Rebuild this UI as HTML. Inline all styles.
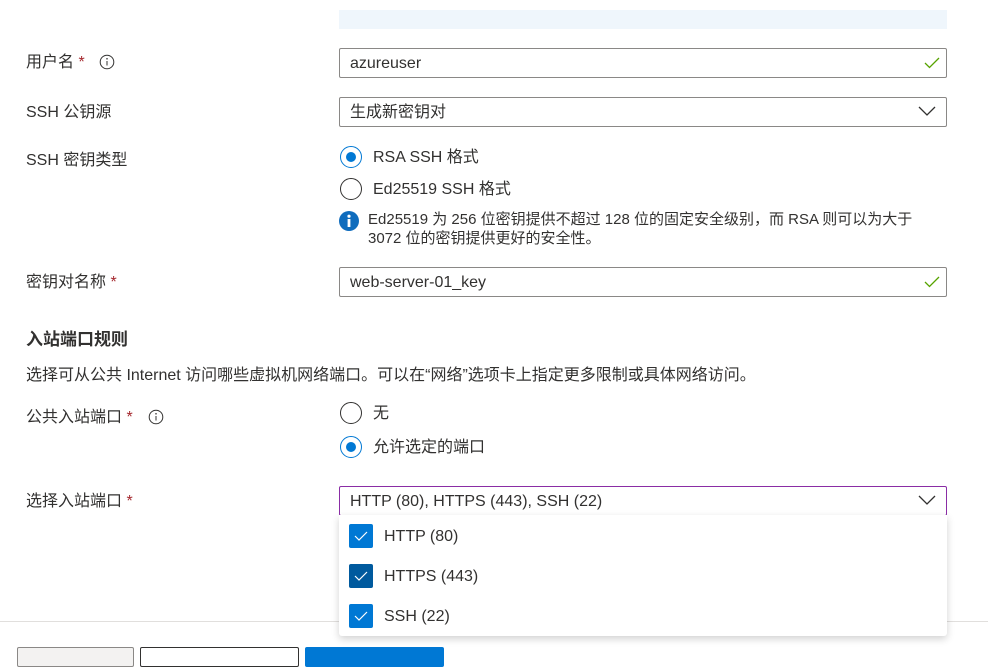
<!DOCTYPE html>
<html><head><meta charset="utf-8"><style>
*{box-sizing:border-box;margin:0;padding:0}
body{width:988px;height:653px;overflow:hidden;background:#fff;position:relative;font-family:"Liberation Sans","Noto Sans CJK SC",sans-serif;color:#323130;font-size:16px}
.a{position:absolute;white-space:nowrap}
.lbl{left:26px;line-height:20px}
.req{color:#a4262c}
.inp{position:absolute;left:339px;width:608px;height:30px;border:1px solid #8a8886;border-radius:2px;padding:0 10px;line-height:29px;font-size:16px}
.radio{position:absolute;left:340px;width:22px;height:22px;border:1.5px solid #323130;border-radius:50%}
.radio.on{border-color:#0078d4}
.radio.on::after{content:"";position:absolute;left:4.5px;top:4.5px;width:10px;height:10px;border-radius:50%;background:#0078d4}
.cb{position:absolute;left:349px;width:24px;height:24px;background:#0078d4;border-radius:2px}
.btn{position:absolute;top:647px;height:20px;border-radius:2px}
</style></head><body>
<div class="a" style="left:339px;top:10px;width:608px;height:19px;background:#eff6fc"></div>

<div class="a lbl" style="top:53px">用户名 <span class="req">*</span></div>
<svg class="a" style="left:99px;top:54px" width="16" height="16" viewBox="0 0 16 16"><circle cx="8" cy="8" r="6.8" fill="none" stroke="#323130" stroke-width="1"/><line x1="8" y1="7" x2="8" y2="11.5" stroke="#323130"/><circle cx="8" cy="4.8" r=".8" fill="#323130"/></svg>
<div class="inp" style="top:48px">azureuser</div>
<svg class="a" style="left:924px;top:56px" width="16" height="14" viewBox="0 0 16 14"><path d="M1 7l4.5 4.5L15 2" fill="none" stroke="#57a300" stroke-width="1.3"/></svg>

<div class="a lbl" style="top:103px">SSH 公钥源</div>
<div class="inp" style="top:97px">生成新密钥对</div>
<svg class="a" style="left:918px;top:105px" width="18" height="12" viewBox="0 0 18 12"><path d="M1 2l8 8 8-8" fill="none" stroke="#323130" stroke-width="1.3"/></svg>

<div class="a lbl" style="top:151px">SSH 密钥类型</div>
<div class="radio on" style="top:146px"></div>
<div class="a" style="left:373px;top:148px;line-height:20px">RSA SSH 格式</div>
<div class="radio" style="top:178px"></div>
<div class="a" style="left:373px;top:180px;line-height:20px">Ed25519 SSH 格式</div>
<svg class="a" style="left:339px;top:211px" width="20" height="20" viewBox="0 0 20 20"><circle cx="10" cy="10" r="10" fill="#0f6cbd"/><rect x="8.6" y="8" width="2.8" height="8" fill="#fff"/><circle cx="10" cy="5.2" r="1.6" fill="#fff"/></svg>
<div class="a" style="left:368px;top:210px;font-size:15px;line-height:19px">Ed25519 为 256 位密钥提供不超过 128 位的固定安全级别，而 RSA 则可以为大于<br>3072 位的密钥提供更好的安全性。</div>

<div class="a lbl" style="top:273px">密钥对名称 <span class="req">*</span></div>
<div class="inp" style="top:267px">web-server-01_key</div>
<svg class="a" style="left:924px;top:275px" width="16" height="14" viewBox="0 0 16 14"><path d="M1 7l4.5 4.5L15 2" fill="none" stroke="#57a300" stroke-width="1.3"/></svg>

<div class="a" style="left:26px;top:330px;font-weight:bold;font-size:17px;line-height:20px">入站端口规则</div>
<div class="a" style="left:26px;top:366px;font-size:16px;line-height:20px">选择可从公共 Internet 访问哪些虚拟机网络端口。可以在“网络”选项卡上指定更多限制或具体网络访问。</div>

<div class="a lbl" style="top:408px">公共入站端口 <span class="req">*</span></div>
<svg class="a" style="left:148px;top:409px" width="16" height="16" viewBox="0 0 16 16"><circle cx="8" cy="8" r="6.8" fill="none" stroke="#323130" stroke-width="1"/><line x1="8" y1="7" x2="8" y2="11.5" stroke="#323130"/><circle cx="8" cy="4.8" r=".8" fill="#323130"/></svg>
<div class="radio" style="top:402px"></div>
<div class="a" style="left:373px;top:404px;line-height:20px">无</div>
<div class="radio on" style="top:436px"></div>
<div class="a" style="left:373px;top:438px;line-height:20px">允许选定的端口</div>

<div class="a lbl" style="top:492px">选择入站端口 <span class="req">*</span></div>
<div class="inp" style="top:486px;border-color:#8a2da5">HTTP (80), HTTPS (443), SSH (22)</div>
<svg class="a" style="left:918px;top:494px" width="18" height="12" viewBox="0 0 18 12"><path d="M1 2l8 8 8-8" fill="none" stroke="#323130" stroke-width="1.3"/></svg>

<div class="a" style="left:0;top:621px;width:988px;height:1px;background:#e1dfdd"></div>
<div class="btn" style="left:17px;width:117px;background:#f3f2f1;border:1px solid #8a8886"></div>
<div class="btn" style="left:140px;width:159px;background:#fff;border:1px solid #323130"></div>
<div class="btn" style="left:305px;width:139px;background:#0078d4"></div>

<div class="a" style="left:339px;top:515px;width:608px;height:121px;background:#fff;border-radius:0 0 3px 3px;box-shadow:0 3px 8px rgba(0,0,0,.18)"></div>
<div class="cb" style="top:524px"></div>
<div class="cb" style="top:564px;background:#005a9e"></div>
<div class="cb" style="top:604px"></div>
<svg class="a" style="left:349px;top:524px" width="24" height="104" viewBox="0 0 24 104"><g fill="none" stroke="#fff" stroke-width="1.2"><path d="M6 12l4 4 8-8"/><path d="M6 52l4 4 8-8"/><path d="M6 92l4 4 8-8"/></g></svg>
<div class="a" style="left:384px;top:527px;line-height:20px">HTTP (80)</div>
<div class="a" style="left:384px;top:567px;line-height:20px">HTTPS (443)</div>
<div class="a" style="left:384px;top:607px;line-height:20px">SSH (22)</div>
</body></html>
